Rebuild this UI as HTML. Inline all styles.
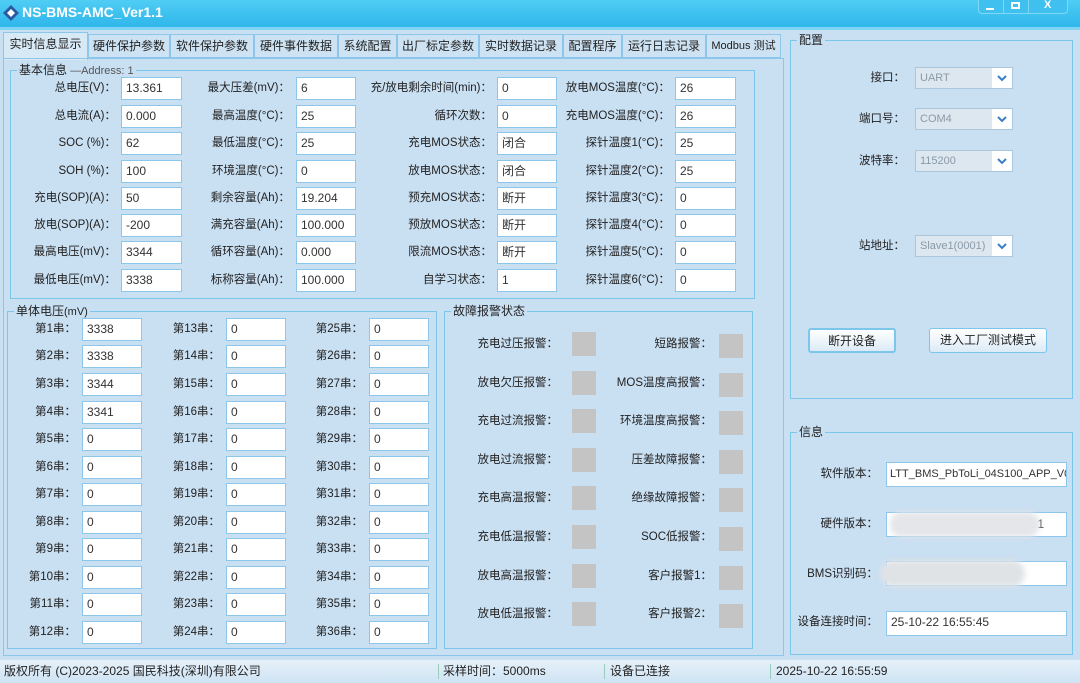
<!DOCTYPE html>
<html><head><meta charset="utf-8"><style>
*{box-sizing:border-box;margin:0;padding:0}
body{width:1080px;height:683px;overflow:hidden;background:#c9dff2;font-family:"Liberation Sans","Noto Sans CJK SC",sans-serif;font-size:12px;color:#222;position:relative}
.a{position:absolute}
.tb{left:0;top:0;width:1080px;height:27px;background:linear-gradient(#4fcdf5,#2fb6ea);color:#fff;font-weight:bold;font-size:14px}
.l{position:absolute;width:160px;text-align:right;white-space:nowrap;line-height:22px;height:22px;font-size:11.5px}
.i{position:absolute;background:#fff;border:1px solid #8cc6ea;height:23px;line-height:20px;padding-left:4px;font-size:12px;color:#333;white-space:nowrap;overflow:hidden}
.g{position:absolute;border:1px solid #7cc6ec}
.gt{position:absolute;background:#c9dff2;padding:0 2px;top:-9px;left:6px;line-height:16px}
.sq{position:absolute;width:24px;height:24px;background:#c4c4c4}
.tab{position:absolute;top:34px;height:24px;border:1px solid #8cc6ea;background:#cde2f2;line-height:22px;text-align:center;font-size:12px}
.cb{position:absolute;background:#dde7ef;border:1px solid #aac7de;height:22px;line-height:20px;padding-left:4px;color:#8a9aa8;font-size:11px}
.cb svg{position:absolute;right:0;top:0;width:20px;height:20px;background:#fff}
.btn{position:absolute;border:1px solid #7cc6ec;border-radius:3px;background:linear-gradient(#fff,#dcebf7);text-align:center;line-height:22px;height:25px}
</style></head><body>
<div class="a tb"><svg class="a" style="left:3px;top:5px" width="16" height="16" viewBox="0 0 16 16"><path d="M8 0L16 8L8 16L0 8Z" fill="#2a5aa0"/><path d="M8 4L12 8L8 12L4 8Z" fill="#fff"/></svg><div class="a" style="left:22px;top:4px">NS-BMS-AMC_Ver1.1</div>
<div class="a" style="left:978px;top:0;width:90px;height:14px;border:1px solid #7fd8f7;border-top:0;border-radius:0 0 4px 4px;background:#3fc0ee"></div>
<div class="a" style="left:1003px;top:0;width:1px;height:13px;background:#7fd8f7"></div><div class="a" style="left:1028px;top:0;width:1px;height:13px;background:#7fd8f7"></div>
<div class="a" style="left:986px;top:8px;width:8px;height:2px;background:#fff"></div><div class="a" style="left:1011px;top:2px;width:9px;height:7px;border:2px solid #fff"></div><div class="a" style="left:1044px;top:-1px;font-size:11px">X</div></div>
<div class="a" style="left:0;top:27px;width:1080px;height:3px;background:#7fd4f4"></div>

<div class="tab" style="left:3px;width:85px;top:32px;height:28px;background:#d8e9f6;border-bottom:0">实时信息显示</div>
<div class="tab" style="left:88px;width:82px">硬件保护参数</div>
<div class="tab" style="left:170px;width:84px">软件保护参数</div>
<div class="tab" style="left:254px;width:84px">硬件事件数据</div>
<div class="tab" style="left:338px;width:59px">系统配置</div>
<div class="tab" style="left:397px;width:82px">出厂标定参数</div>
<div class="tab" style="left:479px;width:84px">实时数据记录</div>
<div class="tab" style="left:563px;width:59px">配置程序</div>
<div class="tab" style="left:622px;width:84px">运行日志记录</div>
<div class="tab" style="left:706px;width:75px;font-size:11px">Modbus 测试</div>
<div class="a" style="left:3px;top:58px;width:781px;height:598px;border:1px solid #8cc6ea"></div>

<div class="g" style="left:10px;top:70px;width:745px;height:229px"><div class="gt">基本信息<span style="color:#555;font-size:11px"> —Address: 1</span></div></div>
<div class="l" style="left:-44px;top:77px">总电压(V)：</div><div class="i" style="left:121px;top:77px;width:61px">13.361</div>
<div class="l" style="left:-44px;top:105px">总电流(A)：</div><div class="i" style="left:121px;top:105px;width:61px">0.000</div>
<div class="l" style="left:-44px;top:132px">SOC (%)：</div><div class="i" style="left:121px;top:132px;width:61px">62</div>
<div class="l" style="left:-44px;top:160px">SOH (%)：</div><div class="i" style="left:121px;top:160px;width:61px">100</div>
<div class="l" style="left:-44px;top:187px">充电(SOP)(A)：</div><div class="i" style="left:121px;top:187px;width:61px">50</div>
<div class="l" style="left:-44px;top:214px">放电(SOP)(A)：</div><div class="i" style="left:121px;top:214px;width:61px">-200</div>
<div class="l" style="left:-44px;top:241px">最高电压(mV)：</div><div class="i" style="left:121px;top:241px;width:61px">3344</div>
<div class="l" style="left:-44px;top:269px">最低电压(mV)：</div><div class="i" style="left:121px;top:269px;width:61px">3338</div>

<div class="l" style="left:130px;top:77px">最大压差(mV)：</div><div class="i" style="left:296px;top:77px;width:60px">6</div>
<div class="l" style="left:130px;top:105px">最高温度(°C)：</div><div class="i" style="left:296px;top:105px;width:60px">25</div>
<div class="l" style="left:130px;top:132px">最低温度(°C)：</div><div class="i" style="left:296px;top:132px;width:60px">25</div>
<div class="l" style="left:130px;top:160px">环境温度(°C)：</div><div class="i" style="left:296px;top:160px;width:60px">0</div>
<div class="l" style="left:130px;top:187px">剩余容量(Ah)：</div><div class="i" style="left:296px;top:187px;width:60px">19.204</div>
<div class="l" style="left:130px;top:214px">满充容量(Ah)：</div><div class="i" style="left:296px;top:214px;width:60px">100.000</div>
<div class="l" style="left:130px;top:241px">循环容量(Ah)：</div><div class="i" style="left:296px;top:241px;width:60px">0.000</div>
<div class="l" style="left:130px;top:269px">标称容量(Ah)：</div><div class="i" style="left:296px;top:269px;width:60px">100.000</div>

<div class="l" style="left:332px;top:77px">充/放电剩余时间(min)：</div><div class="i" style="left:497px;top:77px;width:60px">0</div>
<div class="l" style="left:332px;top:105px">循环次数：</div><div class="i" style="left:497px;top:105px;width:60px">0</div>
<div class="l" style="left:332px;top:132px">充电MOS状态：</div><div class="i" style="left:497px;top:132px;width:60px">闭合</div>
<div class="l" style="left:332px;top:160px">放电MOS状态：</div><div class="i" style="left:497px;top:160px;width:60px">闭合</div>
<div class="l" style="left:332px;top:187px">预充MOS状态：</div><div class="i" style="left:497px;top:187px;width:60px">断开</div>
<div class="l" style="left:332px;top:214px">预放MOS状态：</div><div class="i" style="left:497px;top:214px;width:60px">断开</div>
<div class="l" style="left:332px;top:241px">限流MOS状态：</div><div class="i" style="left:497px;top:241px;width:60px">断开</div>
<div class="l" style="left:332px;top:269px">自学习状态：</div><div class="i" style="left:497px;top:269px;width:60px">1</div>

<div class="l" style="left:510px;top:77px">放电MOS温度(°C)：</div><div class="i" style="left:675px;top:77px;width:61px">26</div>
<div class="l" style="left:510px;top:105px">充电MOS温度(°C)：</div><div class="i" style="left:675px;top:105px;width:61px">26</div>
<div class="l" style="left:510px;top:132px">探针温度1(°C)：</div><div class="i" style="left:675px;top:132px;width:61px">25</div>
<div class="l" style="left:510px;top:160px">探针温度2(°C)：</div><div class="i" style="left:675px;top:160px;width:61px">25</div>
<div class="l" style="left:510px;top:187px">探针温度3(°C)：</div><div class="i" style="left:675px;top:187px;width:61px">0</div>
<div class="l" style="left:510px;top:214px">探针温度4(°C)：</div><div class="i" style="left:675px;top:214px;width:61px">0</div>
<div class="l" style="left:510px;top:241px">探针温度5(°C)：</div><div class="i" style="left:675px;top:241px;width:61px">0</div>
<div class="l" style="left:510px;top:269px">探针温度6(°C)：</div><div class="i" style="left:675px;top:269px;width:61px">0</div>

<div class="g" style="left:7px;top:311px;width:430px;height:338px"><div class="gt">单体电压<span style="font-size:11px">(mV)</span></div></div>
<div class="l" style="left:-84px;top:318px">第1串：</div><div class="i" style="left:82px;top:318px;width:60px">3338</div>
<div class="l" style="left:-84px;top:345px">第2串：</div><div class="i" style="left:82px;top:345px;width:60px">3338</div>
<div class="l" style="left:-84px;top:373px">第3串：</div><div class="i" style="left:82px;top:373px;width:60px">3344</div>
<div class="l" style="left:-84px;top:401px">第4串：</div><div class="i" style="left:82px;top:401px;width:60px">3341</div>
<div class="l" style="left:-84px;top:428px">第5串：</div><div class="i" style="left:82px;top:428px;width:60px">0</div>
<div class="l" style="left:-84px;top:456px">第6串：</div><div class="i" style="left:82px;top:456px;width:60px">0</div>
<div class="l" style="left:-84px;top:483px">第7串：</div><div class="i" style="left:82px;top:483px;width:60px">0</div>
<div class="l" style="left:-84px;top:511px">第8串：</div><div class="i" style="left:82px;top:511px;width:60px">0</div>
<div class="l" style="left:-84px;top:538px">第9串：</div><div class="i" style="left:82px;top:538px;width:60px">0</div>
<div class="l" style="left:-84px;top:566px">第10串：</div><div class="i" style="left:82px;top:566px;width:60px">0</div>
<div class="l" style="left:-84px;top:593px">第11串：</div><div class="i" style="left:82px;top:593px;width:60px">0</div>
<div class="l" style="left:-84px;top:621px">第12串：</div><div class="i" style="left:82px;top:621px;width:60px">0</div>

<div class="l" style="left:60px;top:318px">第13串：</div><div class="i" style="left:226px;top:318px;width:60px">0</div>
<div class="l" style="left:60px;top:345px">第14串：</div><div class="i" style="left:226px;top:345px;width:60px">0</div>
<div class="l" style="left:60px;top:373px">第15串：</div><div class="i" style="left:226px;top:373px;width:60px">0</div>
<div class="l" style="left:60px;top:401px">第16串：</div><div class="i" style="left:226px;top:401px;width:60px">0</div>
<div class="l" style="left:60px;top:428px">第17串：</div><div class="i" style="left:226px;top:428px;width:60px">0</div>
<div class="l" style="left:60px;top:456px">第18串：</div><div class="i" style="left:226px;top:456px;width:60px">0</div>
<div class="l" style="left:60px;top:483px">第19串：</div><div class="i" style="left:226px;top:483px;width:60px">0</div>
<div class="l" style="left:60px;top:511px">第20串：</div><div class="i" style="left:226px;top:511px;width:60px">0</div>
<div class="l" style="left:60px;top:538px">第21串：</div><div class="i" style="left:226px;top:538px;width:60px">0</div>
<div class="l" style="left:60px;top:566px">第22串：</div><div class="i" style="left:226px;top:566px;width:60px">0</div>
<div class="l" style="left:60px;top:593px">第23串：</div><div class="i" style="left:226px;top:593px;width:60px">0</div>
<div class="l" style="left:60px;top:621px">第24串：</div><div class="i" style="left:226px;top:621px;width:60px">0</div>

<div class="l" style="left:203px;top:318px">第25串：</div><div class="i" style="left:369px;top:318px;width:60px">0</div>
<div class="l" style="left:203px;top:345px">第26串：</div><div class="i" style="left:369px;top:345px;width:60px">0</div>
<div class="l" style="left:203px;top:373px">第27串：</div><div class="i" style="left:369px;top:373px;width:60px">0</div>
<div class="l" style="left:203px;top:401px">第28串：</div><div class="i" style="left:369px;top:401px;width:60px">0</div>
<div class="l" style="left:203px;top:428px">第29串：</div><div class="i" style="left:369px;top:428px;width:60px">0</div>
<div class="l" style="left:203px;top:456px">第30串：</div><div class="i" style="left:369px;top:456px;width:60px">0</div>
<div class="l" style="left:203px;top:483px">第31串：</div><div class="i" style="left:369px;top:483px;width:60px">0</div>
<div class="l" style="left:203px;top:511px">第32串：</div><div class="i" style="left:369px;top:511px;width:60px">0</div>
<div class="l" style="left:203px;top:538px">第33串：</div><div class="i" style="left:369px;top:538px;width:60px">0</div>
<div class="l" style="left:203px;top:566px">第34串：</div><div class="i" style="left:369px;top:566px;width:60px">0</div>
<div class="l" style="left:203px;top:593px">第35串：</div><div class="i" style="left:369px;top:593px;width:60px">0</div>
<div class="l" style="left:203px;top:621px">第36串：</div><div class="i" style="left:369px;top:621px;width:60px">0</div>

<div class="g" style="left:444px;top:311px;width:309px;height:338px"><div class="gt">故障报警状态</div></div>
<div class="l" style="left:398px;top:333px">充电过压报警：</div><div class="sq" style="left:572px;top:332px"></div>
<div class="l" style="left:398px;top:372px">放电欠压报警：</div><div class="sq" style="left:572px;top:371px"></div>
<div class="l" style="left:398px;top:410px">充电过流报警：</div><div class="sq" style="left:572px;top:409px"></div>
<div class="l" style="left:398px;top:449px">放电过流报警：</div><div class="sq" style="left:572px;top:448px"></div>
<div class="l" style="left:398px;top:487px">充电高温报警：</div><div class="sq" style="left:572px;top:486px"></div>
<div class="l" style="left:398px;top:526px">充电低温报警：</div><div class="sq" style="left:572px;top:525px"></div>
<div class="l" style="left:398px;top:565px">放电高温报警：</div><div class="sq" style="left:572px;top:564px"></div>
<div class="l" style="left:398px;top:603px">放电低温报警：</div><div class="sq" style="left:572px;top:602px"></div>
<div class="l" style="left:552px;top:333px">短路报警：</div><div class="sq" style="left:719px;top:334px"></div>
<div class="l" style="left:552px;top:372px">MOS温度高报警：</div><div class="sq" style="left:719px;top:373px"></div>
<div class="l" style="left:552px;top:410px">环境温度高报警：</div><div class="sq" style="left:719px;top:411px"></div>
<div class="l" style="left:552px;top:449px">压差故障报警：</div><div class="sq" style="left:719px;top:450px"></div>
<div class="l" style="left:552px;top:487px">绝缘故障报警：</div><div class="sq" style="left:719px;top:488px"></div>
<div class="l" style="left:552px;top:526px">SOC低报警：</div><div class="sq" style="left:719px;top:527px"></div>
<div class="l" style="left:552px;top:565px">客户报警1：</div><div class="sq" style="left:719px;top:566px"></div>
<div class="l" style="left:552px;top:603px">客户报警2：</div><div class="sq" style="left:719px;top:604px"></div>

<div class="g" style="left:790px;top:40px;width:283px;height:359px"><div class="gt">配置</div></div>
<div class="l" style="left:745px;top:67px">接口：</div><div class="cb" style="left:915px;top:67px;width:98px">UART<svg viewBox="0 0 20 20"><path d="M6 8L10 12L14 8" stroke="#3a7fc4" stroke-width="2" fill="none"/></svg></div>
<div class="l" style="left:745px;top:108px">端口号：</div><div class="cb" style="left:915px;top:108px;width:98px">COM4<svg viewBox="0 0 20 20"><path d="M6 8L10 12L14 8" stroke="#3a7fc4" stroke-width="2" fill="none"/></svg></div>
<div class="l" style="left:745px;top:150px">波特率：</div><div class="cb" style="left:915px;top:150px;width:98px">115200<svg viewBox="0 0 20 20"><path d="M6 8L10 12L14 8" stroke="#3a7fc4" stroke-width="2" fill="none"/></svg></div>
<div class="l" style="left:745px;top:235px">站地址：</div><div class="cb" style="left:915px;top:235px;width:98px">Slave1(0001)<svg viewBox="0 0 20 20"><path d="M6 8L10 12L14 8" stroke="#3a7fc4" stroke-width="2" fill="none"/></svg></div>
<div class="btn" style="left:808px;top:328px;width:88px;border-width:2px">断开设备</div>
<div class="btn" style="left:929px;top:328px;width:118px">进入工厂测试模式</div>

<div class="g" style="left:790px;top:432px;width:283px;height:223px"><div class="gt">信息</div></div>
<div class="l" style="left:718px;top:463px">软件版本：</div><div class="i" style="left:886px;top:462px;width:181px;height:25px;line-height:22px;font-size:11px;padding-left:3px">LTT_BMS_PbToLi_04S100_APP_V0.0</div>
<div class="l" style="left:718px;top:513px">硬件版本：</div><div class="i" style="left:886px;top:512px;width:181px;height:25px;line-height:22px;text-align:right;padding-right:22px">1</div>
<div class="a" style="left:890px;top:512px;width:150px;height:25px;border-radius:12px;background:#e4e6e9;filter:blur(3px)"></div>
<div class="l" style="left:718px;top:563px">BMS识别码：</div><div class="i" style="left:886px;top:561px;width:181px;height:25px"></div>
<div class="a" style="left:880px;top:560px;width:145px;height:27px;border-radius:13px;background:#e0e3e6;filter:blur(3px)"></div>
<div class="l" style="left:718px;top:611px">设备连接时间：</div><div class="i" style="left:886px;top:611px;width:181px;height:25px;line-height:20px">25-10-22 16:55:45</div>

<div class="a" style="left:0;top:660px;width:1080px;height:23px;background:linear-gradient(#e6f1fa,#cfe3f3);line-height:23px;font-size:12px">
<div class="a" style="left:4px">版权所有 (C)2023-2025 国民科技(深圳)有限公司</div>
<div class="a" style="left:438px;top:4px;width:1px;height:15px;background:#9cb"></div><div class="a" style="left:443px">采样时间：5000ms</div>
<div class="a" style="left:604px;top:4px;width:1px;height:15px;background:#9cb"></div><div class="a" style="left:610px">设备已连接</div>
<div class="a" style="left:770px;top:4px;width:1px;height:15px;background:#9cb"></div><div class="a" style="left:776px">2025-10-22 16:55:59</div>
</div>
</body></html>
